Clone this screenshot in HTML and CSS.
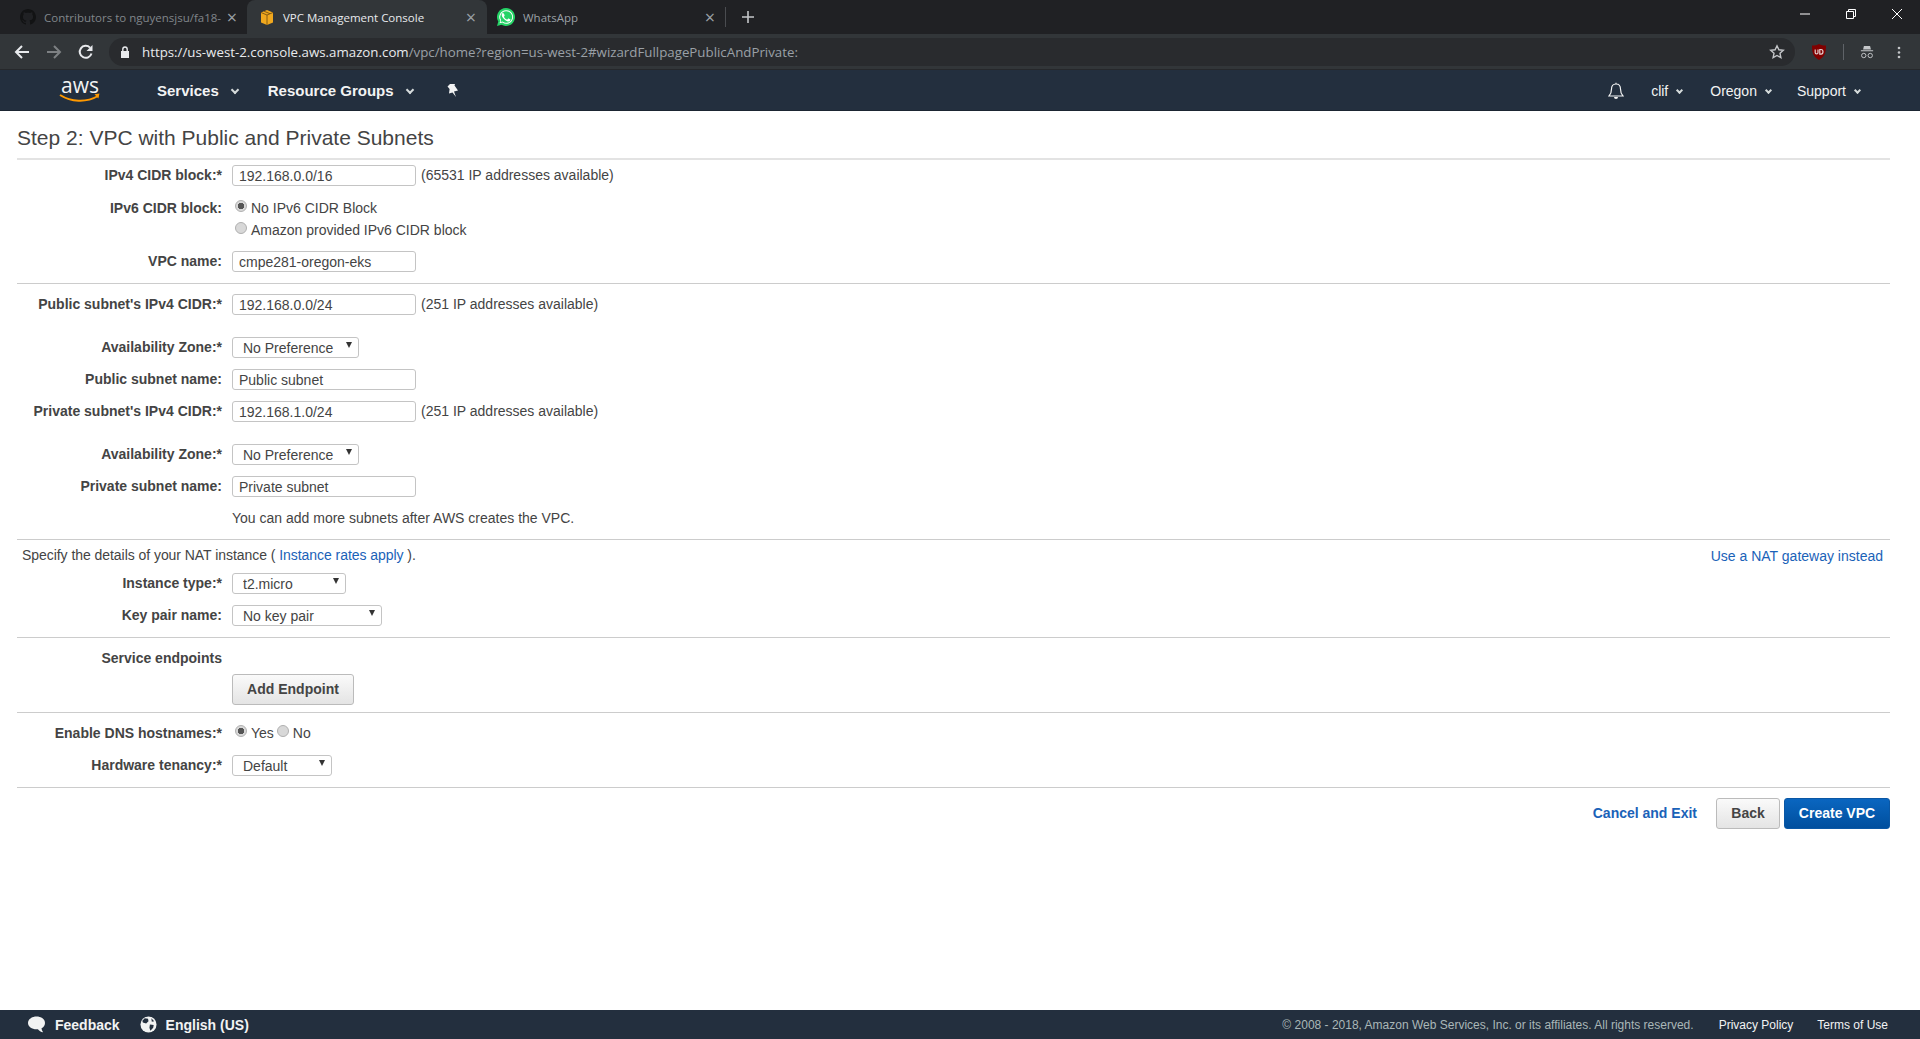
FILE: index.html
```html
<!DOCTYPE html>
<html lang="en">
<head>
    <meta charset="UTF-8">
    <title>VPC Management Console</title>
    <link rel="stylesheet" href="styles.css">
</head>
<body>
    <div class="tabstrip">
        <div class="tab tab-first">
            <svg class="favicon" viewBox="0 0 16 16"><path fill="#121314" d="M8 0C3.6 0 0 3.6 0 8c0 3.5 2.3 6.5 5.5 7.6.4.1.5-.2.5-.4v-1.4c-2.2.5-2.7-1-2.7-1-.4-.9-.9-1.2-.9-1.2-.7-.5.1-.5.1-.5.8.1 1.2.8 1.2.8.7 1.2 1.9.9 2.3.7.1-.5.3-.9.5-1.1-1.8-.2-3.6-.9-3.6-4 0-.9.3-1.6.8-2.1-.1-.2-.4-1 .1-2.1 0 0 .7-.2 2.2.8.6-.2 1.3-.3 2-.3s1.4.1 2 .3c1.5-1 2.2-.8 2.2-.8.4 1.1.2 1.9.1 2.1.5.6.8 1.3.8 2.1 0 3.1-1.9 3.7-3.7 3.9.3.3.6.8.6 1.5v2.2c0 .2.1.5.6.4C13.7 14.5 16 11.5 16 8c0-4.4-3.6-8-8-8z"/></svg>
            <span class="tab-title tab-title-clip">Contributors to nguyensjsu/fa18-</span>
            <span class="tab-close">×</span>
        </div>
        <div class="tab tab-active">
            <svg class="favicon" viewBox="0 0 16 16"><path fill="#f0a81e" d="M2 3.5 8 1l6 2.5v10L8 16l-6-2.5z"/><path fill="none" stroke="#7a5210" stroke-width=".9" d="M2 3.5 8 6l6-2.5M8 6v10M5 2.2l6 2.5"/></svg>
            <span class="tab-title">VPC Management Console</span>
            <span class="tab-close">×</span>
        </div>
        <div class="tab tab-third">
            <svg class="favicon favicon-wa" viewBox="0 0 18 18"><path fill="#25d366" d="M9 0a9 9 0 0 0-7.7 13.6L0 18l4.5-1.2A9 9 0 1 0 9 0z"/><path fill="#fff" d="M9 2.2a6.8 6.8 0 0 0-5.7 10.4l-.7 2.7 2.8-.7A6.8 6.8 0 1 0 9 2.2z"/><path fill="#25d366" d="M9 3.2a5.8 5.8 0 0 0-4.9 8.8l-.4 1.9 1.9-.5A5.8 5.8 0 1 0 9 3.2z"/><path fill="#fff" d="M6.9 5.4c-.2 0-.5 0-.7.3-.3.3-.9.9-.9 2s.9 2.4 1 2.5c.2.2 1.8 2.8 4.4 3.7 1.2.4 2.1.2 2.6-.2.5-.4.8-1 .8-1.5 0-.2-.1-.3-.4-.4l-1.5-.7c-.2-.1-.4 0-.5.1l-.7.9c-.1.1-.3.2-.5.1-.9-.4-2.1-1.2-2.9-2.7-.1-.2 0-.3.1-.4l.5-.7c.1-.2.1-.3 0-.5l-.6-1.5c-.2-.4-.4-.4-.7-.4z" transform="translate(-.6 -.6)"/></svg>
            <span class="tab-title">WhatsApp</span>
            <span class="tab-close">×</span>
        </div>
        <span class="tab-sep"></span>
        <svg class="newtab" viewBox="0 0 12 12"><path d="M6 0v12M0 6h12" stroke="#c4c6c9" stroke-width="1.6"/></svg>
        <div class="winctl">
            <svg viewBox="0 0 12 12"><path d="M1 6h10" stroke="#fff"/></svg>
            <svg viewBox="0 0 12 12"><path d="M1.5 3.5h7v7h-7zM3.5 3.5v-2h7v7h-2" fill="none" stroke="#fff"/></svg>
            <svg viewBox="0 0 12 12"><path d="M1 1l10 10M11 1L1 11" stroke="#fff"/></svg>
        </div>
    </div>

    <div class="toolbar">
        <svg class="tool tool-back" viewBox="0 0 16 16"><path d="M15 8H2M8 2 2 8l6 6" fill="none" stroke="#e8eaed" stroke-width="2"/></svg>
        <svg class="tool tool-fwd" viewBox="0 0 16 16"><path d="M1 8h13M8 2l6 6-6 6" fill="none" stroke="#7d8083" stroke-width="2"/></svg>
        <svg class="tool tool-reload" viewBox="0 0 16 16"><path d="M13.5 9.5A6 6 0 1 1 12 3.6" fill="none" stroke="#e8eaed" stroke-width="2"/><path d="M14.5 1v6h-6z" fill="#e8eaed"/></svg>
        <div class="omnibox">
            <svg class="lock" viewBox="0 0 10 12"><path fill="#e8eaed" d="M1 5h8v7H1z"/><path fill="none" stroke="#e8eaed" stroke-width="1.4" d="M2.8 5V3.2a2.2 2.2 0 0 1 4.4 0V5"/></svg>
            <span class="url"><span class="url-host">https://us-west-2.console.aws.amazon.com</span>/vpc/home?region=us-west-2#wizardFullpagePublicAndPrivate:</span>
            <svg class="star" viewBox="0 0 16 16"><path fill="none" stroke="#c4c6c9" stroke-width="1.4" d="m8 1.8 1.9 4 4.4.5-3.3 3 .9 4.4L8 11.5l-3.9 2.2.9-4.4-3.3-3 4.4-.5z"/></svg>
        </div>
        <svg class="ublock" viewBox="0 0 14 16"><path fill="#800000" d="M7 0c2 1.2 4 1.6 7 1.6 0 6-.6 11-7 14.4C.6 12.6 0 7.600 0 1.600 3 1.600 5 1.200 7 0z"/><path fill="none" stroke="#e6d0d0" stroke-width="1.200" d="M3.200 5.500v3.200c0 1.500 2.800 1.500 2.800 0V5.500M7.800 5.500v4.700h1.300c2.500 0 2.500-4.700 0-4.700z"/></svg>
        <span class="tool-sep"></span>
        <svg class="incognito" viewBox="0 0 16 16"><path fill="#c4c6c9" d="M4.500 1h7l1 4h-9zM1 6h14v1.200H1z"/><circle cx="4.300" cy="12" r="2.500" fill="none" stroke="#c4c6c9" stroke-width="1.100"/><circle cx="11.700" cy="12" r="2.500" fill="none" stroke="#c4c6c9" stroke-width="1.100"/></svg>
        <svg class="dots" viewBox="0 0 4 16"><circle cx="2" cy="2.500" r="1.600" fill="#c4c6c9"/><circle cx="2" cy="8" r="1.600" fill="#c4c6c9"/><circle cx="2" cy="13.500" r="1.600" fill="#c4c6c9"/></svg>
    </div>

    <div class="navbar">
        <svg class="awslogo" viewBox="0 -9 42 35"><text x="21" y="14.500" text-anchor="middle" class="awslogo-text">aws</text><path d="M1 17c11 7 26 8 38 1" fill="none" stroke="#f90" stroke-width="2"/><path d="M35.500 16.200l5-.7-1.200 5z" fill="#f90"/></svg>
        <a class="nav-main nav-services">Services<i class="chev"></i></a>
        <a class="nav-main nav-groups">Resource Groups<i class="chev"></i></a>
        <svg class="pin" viewBox="0 0 12 14"><path fill="#f2f3f3" d="M3 0h5l-.5 1.500L11 6.500 7 7.500 9 13 5.500 8.500 2 9.500l.6-4.500L.5 2.500z"/></svg>
        <div class="nav-right">
            <svg class="bell" viewBox="0 0 16 18"><path fill="none" stroke="#f2f3f3" stroke-width="1.200" d="M8 2c-3 0-4.500 2.300-4.500 5 0 4-1 5.500-2.500 7h14c-1.500-1.500-2.500-3-2.500-7 0-2.700-1.500-5-4.500-5zM8 2V.8"/><path fill="#f2f3f3" d="M6 15h4a2 2 0 0 1-4 0z"/></svg>
            <a class="nav-sub nav-clif">clif<i class="chev"></i></a>
            <a class="nav-sub nav-oregon">Oregon<i class="chev"></i></a>
            <a class="nav-sub nav-support">Support<i class="chev"></i></a>
        </div>
    </div>

    <main class="page">
        <h1 class="page-title">Step 2: VPC with Public and Private Subnets</h1>

        <section class="sect sect-first">
            <div class="row">
                <label class="lbl">IPv4 CIDR block:*</label>
                <input class="txt" type="text" value="192.168.0.0/16">
                <span class="hint">(65531 IP addresses available)</span>
            </div>
            <div class="row row-top">
                <label class="lbl lbl-top">IPv6 CIDR block:</label>
                <div class="radios-col">
                    <label class="radio"><input type="radio" name="v6" checked>No IPv6 CIDR Block</label>
                    <label class="radio"><input type="radio" name="v6">Amazon provided IPv6 CIDR block</label>
                </div>
            </div>
            <div class="row">
                <label class="lbl">VPC name:</label>
                <input class="txt" type="text" value="cmpe281-oregon-eks">
            </div>
        </section>

        <section class="sect">
            <div class="row row-tall">
                <label class="lbl">Public subnet's IPv4 CIDR:*</label>
                <input class="txt" type="text" value="192.168.0.0/24">
                <span class="hint">(251 IP addresses available)</span>
            </div>
            <div class="row">
                <label class="lbl">Availability Zone:*</label>
                <div class="sel sel-az"><select><option>No Preference</option></select></div>
            </div>
            <div class="row">
                <label class="lbl">Public subnet name:</label>
                <input class="txt" type="text" value="Public subnet">
            </div>
            <div class="row row-tall">
                <label class="lbl">Private subnet's IPv4 CIDR:*</label>
                <input class="txt" type="text" value="192.168.1.0/24">
                <span class="hint">(251 IP addresses available)</span>
            </div>
            <div class="row">
                <label class="lbl">Availability Zone:*</label>
                <div class="sel sel-az"><select><option>No Preference</option></select></div>
            </div>
            <div class="row">
                <label class="lbl">Private subnet name:</label>
                <input class="txt" type="text" value="Private subnet">
            </div>
            <div class="row row-text">
                <span class="lbl"></span>
                <span class="note">You can add more subnets after AWS creates the VPC.</span>
            </div>
        </section>

        <section class="sect sect-nat">
            <div class="nat-head">
                <span class="nat-text">Specify the details of your NAT instance ( <a class="link">Instance rates apply</a> ).</span>
                <a class="link nat-link">Use a NAT gateway instead</a>
            </div>
            <div class="row">
                <label class="lbl">Instance type:*</label>
                <div class="sel sel-inst"><select><option>t2.micro</option></select></div>
            </div>
            <div class="row">
                <label class="lbl">Key pair name:</label>
                <div class="sel sel-key"><select><option>No key pair</option></select></div>
            </div>
        </section>

        <section class="sect">
            <div class="row row-text row-svc">
                <label class="lbl">Service endpoints</label>
            </div>
            <div class="row row-btn">
                <span class="lbl"></span>
                <button class="btn btn-endpoint" type="button">Add Endpoint</button>
            </div>
        </section>

        <section class="sect">
            <div class="row row-text row-dns">
                <label class="lbl">Enable DNS hostnames:*</label>
                <label class="radio"><input type="radio" name="dns" checked>Yes</label>
                <label class="radio radio-no"><input type="radio" name="dns">No</label>
            </div>
            <div class="row">
                <label class="lbl">Hardware tenancy:*</label>
                <div class="sel sel-hw"><select><option>Default</option></select></div>
            </div>
        </section>

        <section class="sect actions">
            <a class="link cancel">Cancel and Exit</a>
            <button class="btn btn-back" type="button">Back</button>
            <button class="btn btn-primary" type="button">Create VPC</button>
        </section>
    </main>

    <footer class="footer">
        <svg class="foot-icon foot-bubble" viewBox="0 0 18 17"><path fill="#f2f3f3" d="M9 0c5 0 9 2.900 9 6.800 0 2.600-1.600 4.600-3.700 5.800.1 1.300.7 2.700 1.700 4-2.300-.3-4.300-1.500-5.500-3.200-.5.100-1 .1-1.500.1-5 0-9-3-9-6.700S4 0 9 0z"/></svg>
        <a class="foot-main">Feedback</a>
        <svg class="foot-icon foot-globe" viewBox="0 0 18 18"><circle cx="9" cy="9" r="8.500" fill="#f2f3f3"/><path fill="#232f3e" d="M5 2.500 8.500 3 9 5.500 6.500 8 3 7 2.500 5zM10.500 9l4 .5-.5 3-3 3-1-3zM12 2.500l3 3-2.500.5z"/></svg>
        <a class="foot-main">English (US)</a>
        <span class="foot-copy">© 2008 - 2018, Amazon Web Services, Inc. or its affiliates. All rights reserved.</span>
        <a class="foot-link foot-privacy">Privacy Policy</a>
        <a class="foot-link">Terms of Use</a>
    </footer>
</body>
</html>
```

FILE: styles.css
```css
* {
    box-sizing: border-box;
}
html, body {
    height: 100%;
}
body {
    margin: 0;
    height: 100vh;
    display: flex;
    flex-direction: column;
    background: #fff;
    color: #444;
    font-family: "Liberation Sans", Arial, sans-serif;
    font-size: 14px;
    overflow: hidden;
}

/* browser chrome */
.tabstrip {
    height: 34px;
    flex: none;
    background: #202124;
    display: flex;
    align-items: center;
    font-family: "Open Sans", sans-serif;
    font-size: 11.5px;
}
.tab {
    height: 34px;
    display: flex;
    align-items: center;
    color: #9aa0a6;
    flex: none;
}
.tab-first {
    width: 247px;
    padding-left: 20px;
}
.tab-active {
    width: 240px;
    padding-left: 12px;
    background: #323639;
    color: #e8eaed;
    border-radius: 8px 8px 0 0;
}
.tab-third {
    width: 238px;
    padding-left: 10px;
}
.favicon {
    width: 16px;
    height: 16px;
    flex: none;
}
.favicon-wa {
    width: 18px;
    height: 18px;
}
.tab-title {
    margin-left: 8px;
    flex: 1;
    min-width: 0;
    white-space: nowrap;
}
.tab-title-clip {
    color: #80868b;
}
.tab-close {
    width: 22px;
    margin: 0 4px;
    flex: none;
    font-size: 18px;
    line-height: 18px;
    color: #9aa0a6;
    text-align: center;
}
.tab-active .tab-close {
    margin-right: 5px;
}
.tab-sep {
    width: 1px;
    height: 20px;
    background: #4a4c50;
}
.newtab {
    width: 12px;
    height: 12px;
    margin-left: 16px;
}
.winctl {
    margin-left: auto;
    display: flex;
    gap: 34px;
    padding-right: 17px;
    margin-top: -6px;
}
.winctl svg {
    width: 12px;
    height: 12px;
}

.toolbar {
    height: 36px;
    flex: none;
    padding-top: 1px;
    background: #323639;
    display: flex;
    align-items: center;
    border-bottom: 1px solid #26282b;
}
.tool {
    width: 16px;
    height: 16px;
    flex: none;
}
.tool-back {
    margin-left: 14px;
}
.tool-fwd {
    margin-left: 16px;
}
.tool-reload {
    margin-left: 16px;
}
.omnibox {
    margin-left: 15px;
    width: 1686px;
    height: 28px;
    background: #292b2e;
    border-radius: 14px;
    display: flex;
    align-items: center;
    font-family: "Open Sans", sans-serif;
    font-size: 13.3px;
    color: #9aa0a6;
    flex: none;
}
.lock {
    width: 10px;
    height: 12px;
    margin-left: 11px;
}
.url {
    margin-left: 12px;
    white-space: nowrap;
}
.url-host {
    color: #e8eaed;
}
.star {
    width: 16px;
    height: 16px;
    margin-left: auto;
    margin-right: 10px;
}
.ublock {
    width: 14px;
    height: 16px;
    margin-left: 17px;
    flex: none;
}
.tool-sep {
    width: 1px;
    height: 16px;
    background: #5f6368;
    margin-left: 17px;
}
.incognito {
    width: 14px;
    height: 14px;
    margin-left: 16px;
    flex: none;
}
.dots {
    width: 4px;
    height: 13px;
    margin-left: 23px;
    flex: none;
}

/* aws nav */
.navbar {
    height: 41px;
    flex: none;
    padding-top: 1px;
    background: #232f3e;
    color: #f2f3f3;
    display: flex;
    align-items: center;
    border-bottom: 1px solid #1b2532;
}
.awslogo {
    width: 42px;
    height: 35px;
    margin: -9px 0 0 59px;
    flex: none;
}
.awslogo-text {
    fill: #f2f3f3;
    font-family: "Open Sans", sans-serif;
    font-size: 21px;
}
.chev {
    display: inline-block;
    width: 6px;
    height: 6px;
    border-right: 2px solid #d5dbdb;
    border-bottom: 2px solid #d5dbdb;
    transform: rotate(45deg);
    margin-left: 13px;
    position: relative;
    top: -3px;
}
.nav-main {
    font-weight: bold;
    font-size: 15px;
    white-space: nowrap;
}
.nav-services {
    margin-left: 56px;
}
.nav-groups {
    margin-left: 30px;
}
.pin {
    width: 12px;
    height: 14px;
    margin-left: 34px;
}
.nav-right {
    margin-left: auto;
    display: flex;
    align-items: center;
    padding-right: 60px;
}
.bell {
    width: 16px;
    height: 18px;
    margin-right: 27px;
}
.nav-sub {
    font-size: 14px;
    white-space: nowrap;
}
.nav-sub .chev {
    width: 5px;
    height: 5px;
    margin-left: 9px;
}
.nav-oregon {
    margin-left: 28px;
}
.nav-support {
    margin-left: 26px;
}

/* form */
.page {
    flex: 1;
    padding: 0 30px 0 17px;
}
.page-title {
    margin: 0;
    height: 47px;
    padding-top: 15px;
    font-size: 21px;
    font-weight: normal;
    line-height: 24px;
}
.sect {
    border-top: 1px solid #ccc;
    padding-top: 10px;
}
.sect-first {
    border-top: 2px solid #e3e3e3;
    padding-top: 5px;
}
.sect-nat {
    padding-top: 5px;
}
.row {
    display: flex;
    align-items: center;
    min-height: 21px;
    margin-bottom: 11px;
}
.row-top {
    align-items: flex-start;
}
.row-tall {
    margin-bottom: 22px;
}
.row-text {
    min-height: 20px;
}
.row-svc {
    margin-bottom: 6px;
}
.row-btn {
    margin-bottom: 7px;
}
.row-dns {
    margin-bottom: 12px;
}
.lbl {
    width: 205px;
    margin: -1px 10px 0 0;
    flex: none;
    text-align: right;
    font-weight: bold;
    white-space: nowrap;
}
.row-text .lbl {
    margin-top: 0;
}
.lbl-top {
    line-height: 20px;
    margin-top: 1px;
}
.txt {
    width: 184px;
    height: 21px;
    padding: 1px 6px 0;
    border: 1px solid #c4c4c4;
    border-radius: 3px;
    background: #fff;
    color: #444;
    font: 14px "Liberation Sans", Arial, sans-serif;
}
.hint {
    margin-left: 5px;
    margin-top: -1px;
}
.note {
    white-space: nowrap;
}
.radios-col {
    display: flex;
    flex-direction: column;
    gap: 2px;
    margin-top: 1px;
}
.radio {
    display: flex;
    align-items: center;
    height: 20px;
    white-space: nowrap;
}
.radio input {
    appearance: none;
    width: 12px;
    height: 12px;
    margin: -4px 4px 0 3px;
    border: 1px solid #b0b0b0;
    border-radius: 50%;
    background: #d8d8d8;
}
.radio input:checked {
    background: radial-gradient(circle, #555 0 3px, #d8d8d8 3.5px);
}
.radio-no input {
    margin-left: 3px;
}
.sel {
    position: relative;
    height: 21px;
}
.sel::after {
    content: "";
    position: absolute;
    right: 7px;
    top: 5px;
    border-left: 3px solid transparent;
    border-right: 3px solid transparent;
    border-top: 6px solid #333;
}
.sel select {
    appearance: none;
    width: 100%;
    height: 100%;
    padding: 1px 0 0 10px;
    border: 1px solid #c4c4c4;
    border-radius: 3px;
    background: #fff;
    color: #444;
    font: 14px "Liberation Sans", Arial, sans-serif;
}
.sel-az {
    width: 127px;
}
.sel-inst {
    width: 114px;
}
.sel-key {
    width: 150px;
}
.sel-hw {
    width: 100px;
}
.nat-head {
    display: flex;
    justify-content: space-between;
    height: 20px;
    line-height: 20px;
    padding: 0 7px 0 5px;
    margin-bottom: 8px;
}
.nat-text {
    letter-spacing: -0.05px;
}
.nat-link {
    margin-top: 1px;
}
.link {
    color: #1a62b8;
}
.btn {
    height: 31px;
    padding: 0 0 2px;
    border: 1px solid #bbb;
    border-radius: 3px;
    background: linear-gradient(#fafafa, #e4e4e4);
    color: #444;
    font: bold 14px "Liberation Sans", Arial, sans-serif;
}
.btn-endpoint {
    width: 122px;
}
.actions {
    display: flex;
    justify-content: flex-end;
    align-items: center;
}
.cancel {
    font-weight: bold;
    margin: -2px 19px 0 0;
}
.btn-back {
    width: 64px;
    margin-right: 4px;
}
.btn-primary {
    width: 106px;
    border-color: #0a57a5;
    background: linear-gradient(#0a66c0, #004f9e);
    color: #fff;
}

/* footer */
.footer {
    height: 29px;
    flex: none;
    background: #232f3e;
    color: #f2f3f3;
    display: flex;
    align-items: center;
    padding-right: 32px;
}
.foot-icon {
    width: 17px;
    height: 17px;
    flex: none;
}
.foot-bubble {
    margin-left: 28px;
}
.foot-globe {
    margin-left: 20px;
}
.foot-main {
    margin-left: 9px;
    font-weight: bold;
    font-size: 14px;
}
.foot-bubble + .foot-main {
    margin-left: 10px;
}
.foot-copy {
    margin-left: auto;
    font-size: 12px;
    color: #aab7b8;
}
.foot-link {
    font-size: 12px;
}
.foot-privacy {
    margin: 0 24px 0 25px;
}
```
